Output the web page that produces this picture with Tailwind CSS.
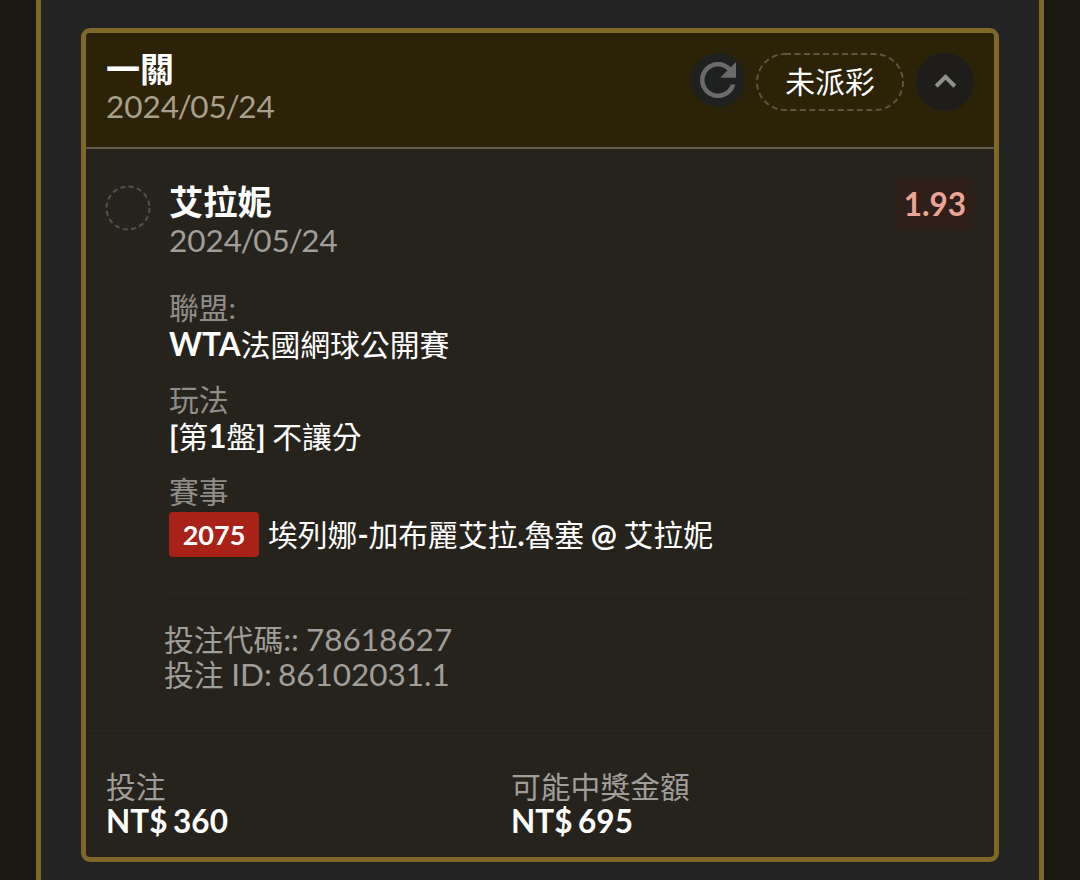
<!DOCTYPE html>
<html lang="zh-Hant">
<head>
  <meta charset="UTF-8" />
  <meta name="viewport" content="width=device-width, initial-scale=1" />
  <title>注單</title>
  <script src="https://cdn.jsdelivr.net/npm/@tailwindcss/browser@4"></script>
</head>
<body class="bg-[#1b1811] font-[Lato,'Noto_Sans_CJK_TC',sans-serif] text-white">

  <main class="w-[1008px] h-[880px] ml-[36px] border-x-[5px] border-[#7f6727] bg-[#232323] px-[40px] pt-[28px] overflow-hidden">
    <article class="h-[834px] border-[5px] border-[#7f6727] rounded-[9px] bg-[#26231c] overflow-hidden">

      <!-- Ticket header -->
      <header class="h-[116px] bg-[#2b2208] border-b-2 border-[#655b49] pl-[20px] pr-[20px] pt-[17px] flex justify-between items-start">
        <div>
          <h1 class="text-[34px] leading-[38px] font-bold">一關</h1>
          <p class="text-[31.5px] leading-[36px] text-[#a9a08c]">2024<span class="-mx-[1.5px]">/</span>05<span class="-mx-[1.5px]">/</span>24</p>
        </div>
        <div class="flex items-start mt-[3px]">
          <button class="size-[54px] rounded-full bg-[#1f2020] flex items-center justify-center mr-[11px]">
            <svg class="size-[54px]" viewBox="0 0 24 24" fill="#6b6b69">
              <path d="M17.65 6.35C16.2 4.9 14.21 4 12 4c-4.42 0-7.99 3.58-7.99 8s3.57 8 7.99 8c3.73 0 6.84-2.55 7.73-6h-2.08c-.82 2.33-3.04 4-5.65 4-3.31 0-6-2.69-6-6s2.69-6 6-6c1.66 0 3.14.69 4.22 1.78L13 11h7V4l-2.35 2.35z" />
            </svg>
          </button>
          <span class="w-[148px] h-[58px]">
            <svg class="absolute" width="148" height="58" fill="none">
              <rect x="1" y="1" width="146" height="56" rx="28" stroke="#5f5442" stroke-width="2" stroke-dasharray="6 3.500" />
            </svg>
            <span class="block text-center text-[29.8px] leading-[58px]">未派彩</span>
          </span>
          <button class="size-[58px] rounded-full bg-[#1e1d1c] flex items-center justify-center ml-[12px]">
            <svg class="size-[43px]" viewBox="0 0 24 24" fill="#8f8f8d">
              <path d="M12 7.300l-6 6 1.600 1.600L12 10.500l4.400 4.400L18 13.300z" />
            </svg>
          </button>
        </div>
      </header>

      <!-- Selection -->
      <section class="h-[581px] pl-[19px] pr-[23px] pt-[33px] flex">
        <svg class="mt-[3px] mr-[18px] size-[46px] shrink-0" viewBox="0 0 46 46" fill="none">
          <circle cx="23" cy="23" r="21.500" stroke="#55524c" stroke-width="2" stroke-dasharray="5 3.443" />
        </svg>
        <div class="grow">
          <div class="flex justify-between items-start">
            <div>
              <h2 class="text-[34.2px] leading-[40px] font-bold">艾拉妮</h2>
              <p class="text-[31.5px] leading-[36px] text-[#a09e9a]">2024<span class="-mx-[1.5px]">/</span>05<span class="-mx-[1.5px]">/</span>24</p>
            </div>
            <span class="-mt-[5px] -mr-[3px] px-[8px] h-[54px] leading-[54px] rounded bg-[#2e2019] text-[31.5px] font-bold text-[#eba496]">1.93</span>
          </div>
          <dl class="mt-[31px] text-[29.8px] leading-[37px]">
            <dt class="text-[#8f8d89]">聯盟:</dt>
            <dd class="mb-[18px]"><b class="text-[31.5px]">WTA</b>法國網球公開賽</dd>
            <dt class="text-[#8f8d89]">玩法</dt>
            <dd class="mb-[18px]"><b>[</b>第<b class="text-[31.5px]">1</b>盤<b>]</b><span class="[word-spacing:-1px]"> 不讓分</span></dd>
            <dt class="text-[#8f8d89]">賽事</dt>
            <dd class="flex items-center mt-[2px]">
              <span class="w-[90px] h-[45px] rounded-[4px] bg-[#a82218] text-center text-[27px] leading-[45px] font-bold mr-[9px]">2075</span>
              <span class="[word-spacing:-1px]">埃列娜<b>-</b>加布麗艾拉<b>.</b>魯塞 <b class="text-[31px]">@</b> 艾拉妮</span>
            </dd>
          </dl>
          <div class="mt-[36px] border-t-2 border-[#292620] pt-[27px]">
            <div class="-ml-[5px] text-[29.8px] leading-[34px] text-[#a09e9a]">
              <p>投注代碼<span class="text-[31.5px] [word-spacing:-1px]">:: 78618627</span></p>
              <p>投注 <span class="text-[31.5px] [word-spacing:-2px]">ID: 86102031.1</span></p>
            </div>
          </div>
        </div>
      </section>

      <!-- Stake and payout -->
      <footer class="border-t-2 border-[#292620] pl-[20px] pt-[38px] grid grid-cols-[405px_1fr]">
        <div>
          <p class="text-[29.8px] leading-[34px] text-[#a09e9a]">投注</p>
          <p class="text-[31.5px] leading-[34px] font-bold [word-spacing:-2px]">NT$ 360</p>
        </div>
        <div>
          <p class="text-[29.8px] leading-[34px] text-[#a09e9a]">可能中獎金額</p>
          <p class="text-[31.5px] leading-[34px] font-bold [word-spacing:-2px]">NT$ 695</p>
        </div>
      </footer>
    </article>
  </main>

</body>
</html>
